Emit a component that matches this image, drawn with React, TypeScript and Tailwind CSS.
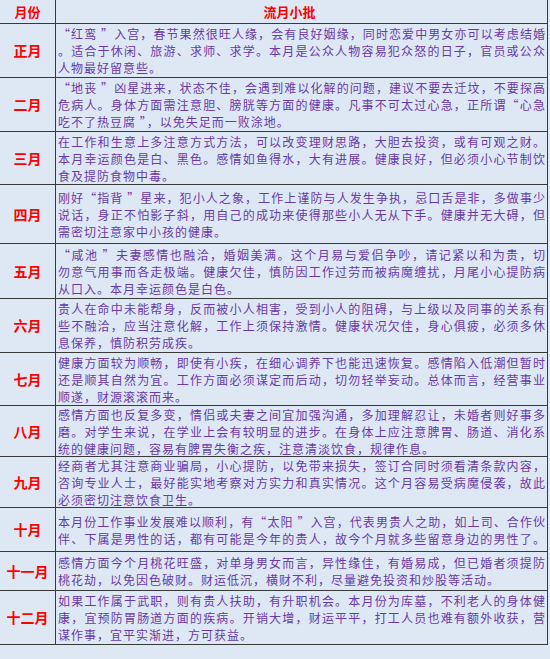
type Row = { month: string; h: number; lines: string[]; lastFull?: boolean };

const rows: Row[] = [
  {
    month: "正月",
    h: 55,
    lines: [
      "“红鸾 ”入宫，春节果然很旺人缘，会有良好姻缘，同时恋爱中男女亦可以考虑结婚",
      "。适合于休闲、旅游、求师、求学。本月是公众人物容易犯众怒的日子，官员或公众",
      "人物最好留意些。",
    ],
  },
  {
    month: "二月",
    h: 55,
    lines: [
      "“地丧 ”凶星进来，状态不佳，会遇到难以化解的问题，建议不要去迁坟，不要探高",
      "危病人。身体方面需注意胆、膀胱等方面的健康。凡事不可太过心急，正所谓“心急",
      "吃不了热豆腐 ”，以免失足而一败涂地。",
    ],
  },
  {
    month: "三月",
    h: 54,
    lines: [
      "在工作和生意上多注意方式方法，可以改变理财思路，大胆去投资，或有可观之财。",
      "本月幸运颜色是白、黑色。感情如鱼得水，大有进展。健康良好，但必须小心节制饮",
      "食及提防食物中毒。",
    ],
  },
  {
    month: "四月",
    h: 60,
    lines: [
      "刚好“指背 ”星来，犯小人之象，工作上谨防与人发生争执，忌口舌是非，多做事少",
      "说话，身正不怕影子斜，用自己的成功来使得那些小人无从下手。健康并无大碍，但",
      "需密切注意家中小孩的健康。",
    ],
  },
  {
    month: "五月",
    h: 56,
    lines: [
      "“咸池 ”夫妻感情也融洽，婚姻美满。这个月易与爱侣争吵，请记紧以和为贵，切",
      "勿意气用事而各走极端。健康欠佳，慎防因工作过劳而被病魔缠扰，月尾小心提防病",
      "从口入。本月幸运颜色是白色。",
    ],
  },
  {
    month: "六月",
    h: 55,
    lines: [
      "贵人在命中未能帮身，反而被小人相害，受到小人的阻碍，与上级以及同事的关系有",
      "些不融洽，应当注意化解，工作上须保持激情。健康状况欠佳，身心俱疲，必须多休",
      "息保养，慎防积劳成疾。",
    ],
  },
  {
    month: "七月",
    h: 54,
    lines: [
      "健康方面较为顺畅，即使有小疾，在细心调养下也能迅速恢复。感情陷入低潮但暂时",
      "还是顺其自然为宜。工作方面必须谋定而后动，切勿轻举妄动。总体而言，经营事业",
      "顺遂，财源滚滚而来。",
    ],
  },
  {
    month: "八月",
    h: 52,
    lines: [
      "感情方面也反复多变，情侣或夫妻之间宜加强沟通，多加理解忍让，未婚者则好事多",
      "磨。对学生来说，在学业上会有较明显的进步。在身体上应注意脾胃、肠道、消化系",
      "统的健康问题，容易有脾胃失衡之疾，注意清淡饮食，规律作息。",
    ],
  },
  {
    month: "九月",
    h: 52,
    lines: [
      "经商者尤其注意商业骗局，小心提防，以免带来损失，签订合同时须看清条款内容，",
      "咨询专业人士，最好能实地考察对方实力和真实情况。这个月容易受病魔侵袭，故此",
      "必须密切注意饮食卫生。",
    ],
  },
  {
    month: "十月",
    h: 45,
    lastFull: true,
    lines: [
      "本月份工作事业发展难以顺利，有“太阳 ”入宫，代表男贵人之助，如上司、合作伙",
      "伴、下属是男性的话，都有可能是今年的贵人，故今个月就多些留意身边的男性了。",
    ],
  },
  {
    month: "十一月",
    h: 40,
    lines: [
      "感情方面今个月桃花旺盛，对单身男女而言，异性缘佳，有婚易成，但已婚者须提防",
      "桃花劫，以免因色破财。财运低沉，横财不利，尽量避免投资和炒股等活动。",
    ],
  },
  {
    month: "十二月",
    h: 54,
    lines: [
      "如果工作属于武职，则有贵人扶助，有升职机会。本月份为库墓，不利老人的身体健",
      "康，宜预防胃肠道方面的疾病。开销大增，财运平平，打工人员也难有额外收获，营",
      "谋作事，宜平实渐进，方可获益。",
    ],
  },
];

const font = { fontFamily: '"Noto Sans CJK SC", "Noto Sans", sans-serif' };

export default function App() {
  return (
    <div className="w-[550px] h-[659px] overflow-hidden bg-[#dde8f4]" style={font}>
      <div className="w-[548px] border-r border-b border-[#3a3a3a]">
        {/* header */}
        <div className="flex h-[24px] border-b border-[#3a3a3a]">
          <div className="w-[56px] shrink-0 border-r border-[#3a3a3a] flex items-center justify-center text-[13px] font-bold text-[#ff0000]">
            月份
          </div>
          <div className="flex-1 flex items-center justify-center pr-6 text-[13px] font-bold text-[#ff0000]">
            流月小批
          </div>
        </div>

        {rows.map((r, i) => (
          <div
            key={r.month}
            className={`flex ${i < rows.length - 1 ? "border-b border-[#3a3a3a]" : ""}`}
            style={{ height: r.h - 1 }}
          >
            <div className="w-[56px] shrink-0 border-r border-[#3a3a3a] flex items-center justify-center text-[14px] font-bold text-[#ff0000]">
              {r.month}
            </div>
            <div className="flex-1 flex flex-col justify-center pl-[2px] pr-[1px] text-[12px] leading-[17px] tracking-[1px] text-[#6a3aa8]">
              {r.lines.map((l, j) => {
                const full = j < r.lines.length - 1 || r.lastFull;
                return (
                  <div
                    key={j}
                    className={`whitespace-nowrap ${full ? "text-justify [text-align-last:justify]" : ""}`}
                  >
                    {l}
                  </div>
                );
              })}
            </div>
          </div>
        ))}
      </div>
    </div>
  );
}
